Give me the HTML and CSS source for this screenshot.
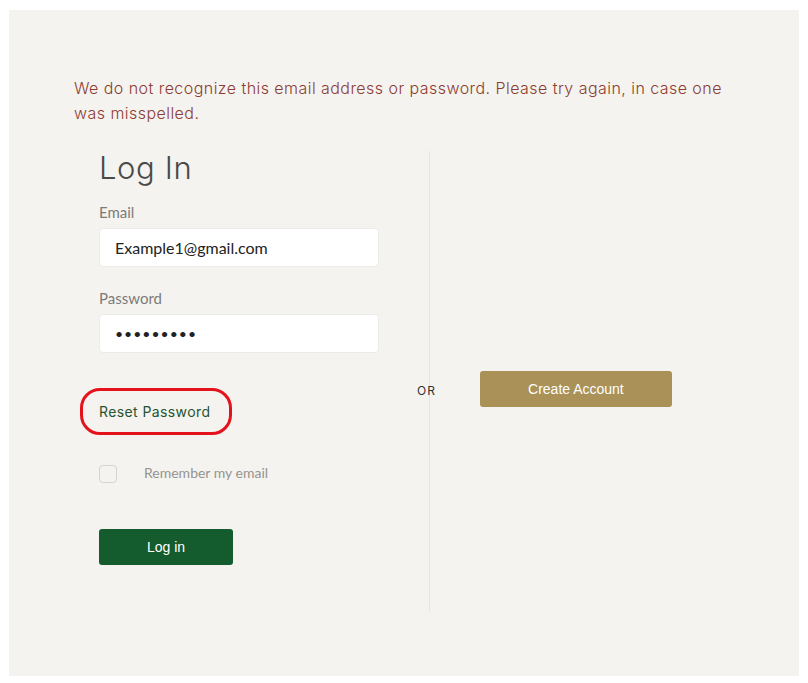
FILE: index.html
```html
<!DOCTYPE html>
<html lang="en">

<head>
    <meta charset="UTF-8">
    <meta name="viewport" content="width=device-width, initial-scale=1.0">
    <title>Log In</title>
    <link rel="stylesheet" href="styles.css">
</head>

<body>
    <div class="panel">
        <!-- Error shown after a failed sign in -->
        <p class="alert">We do not recognize this email address or password. Please try again, in case one was misspelled.</p>

        <div class="columns">
            <div class="login-col">
                <h1>Log In</h1>
                <form id="loginForm">
                    <label for="email">Email</label>
                    <input type="text" id="email" name="email" value="Example1@gmail.com">

                    <label for="password">Password</label>
                    <input type="password" id="password" name="password" value="password1">

                    <div class="reset-row">
                        <a href="#" class="reset-link">Reset Password</a>
                    </div>

                    <div class="remember">
                        <input type="checkbox" id="remember" name="remember">
                        <label for="remember">Remember my email</label>
                    </div>

                    <button type="submit" class="btn btn-login">Log in</button>
                </form>
            </div>

            <div class="create-col">
                <span class="or">OR</span>
                <button type="button" class="btn btn-create">Create Account</button>
            </div>
        </div>
    </div>
</body>

</html>
```

FILE: styles.css
```css
body {
    margin: 0;
    padding: 0;
    background-color: #fff;
    font-family: Lato, "Open Sans", sans-serif;
}

.panel {
    margin: 10px 9px 0 9px;
    width: 790px;
    height: 666px;
    box-sizing: border-box;
    padding: 66px 0 0 65px;
    background-color: #f4f3ef;
}

.alert {
    margin: 0;
    width: 665px;
    font-family: Inter, sans-serif;
    font-weight: 300;
    font-size: 16px;
    letter-spacing: 0.45px;
    line-height: 25px;
    color: #8d3c31;
}

.columns {
    display: flex;
    margin-top: 25px;
}

.login-col {
    width: 330px;
    padding: 0 0 47px 25px;
    border-right: 1px solid #e6e4df;
}

h1 {
    margin: 0 0 17px 0;
    font-family: Inter, sans-serif;
    font-weight: 300;
    font-size: 31px;
    letter-spacing: 0.6px;
    line-height: 34px;
    color: #4a4a4a;
}

#loginForm > label {
    display: block;
    font-size: 15px;
    line-height: 20px;
    color: #7d7b78;
    margin-bottom: 6px;
}

input[type="text"],
input[type="password"] {
    display: block;
    width: 280px;
    height: 39px;
    box-sizing: border-box;
    padding: 0 15px;
    border: 1px solid #ecebe7;
    border-radius: 4px;
    background-color: #fff;
    font-family: Lato, sans-serif;
    font-size: 16px;
    color: #222;
    margin-bottom: 21px;
}

input[type="password"] {
    font-size: 14px;
    letter-spacing: 1px;
    margin-bottom: 35px;
}

.reset-row {
    margin-left: -19px;
    width: 130px;
    height: 41px;
    border: 3px solid #e4121b;
    border-radius: 20px;
    display: flex;
    align-items: center;
    padding-left: 16px;
}

.reset-link {
    font-family: Inter, sans-serif;
    font-size: 14px;
    letter-spacing: 0.4px;
    color: #27532f;
    text-decoration: none;
}

.remember {
    display: flex;
    align-items: center;
    margin-top: 28px;
}

.remember input {
    appearance: none;
    margin: 0;
    width: 18px;
    height: 18px;
    border: 1px solid #d6d4cf;
    border-radius: 4px;
    background-color: #f4f3ef;
    position: relative;
    top: 2px;
}

.remember label {
    margin-left: 27px;
    font-size: 14px;
    color: #959391;
}

.btn {
    border: none;
    border-radius: 3px;
    height: 36px;
    color: #fff;
    font-family: "Liberation Sans", Arial, sans-serif;
    font-size: 14px;
    cursor: pointer;
}

.btn-login {
    display: block;
    width: 134px;
    margin-top: 48px;
    background-color: #145c2e;
}

.create-col {
    display: flex;
    align-items: flex-start;
    padding-top: 220px;
}

.or {
    margin-left: -13px;
    margin-top: 12px;
    font-family: Inter, sans-serif;
    font-size: 12px;
    letter-spacing: 1px;
    color: #333;
}

.btn-create {
    margin-left: 44px;
    width: 192px;
    background-color: #a99158;
}
```
